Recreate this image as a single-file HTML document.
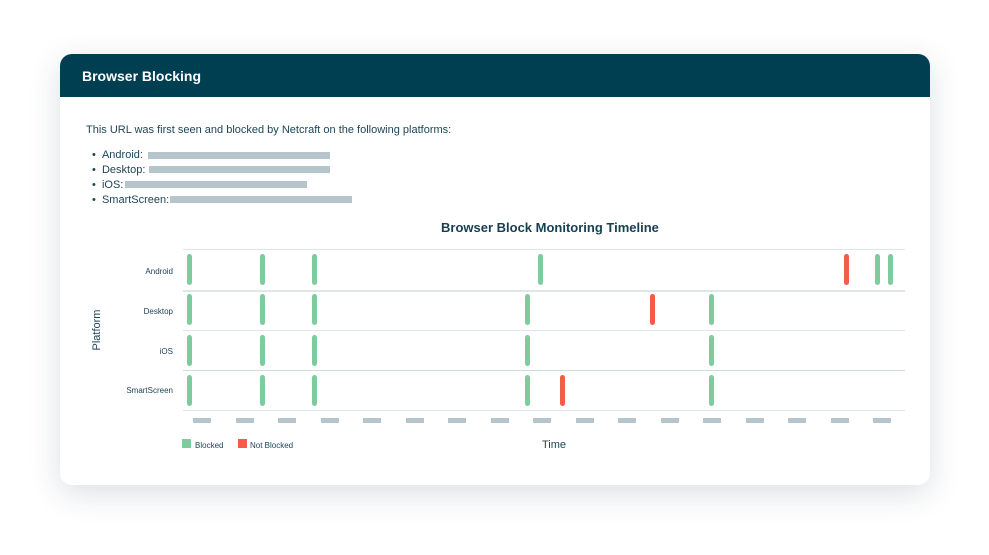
<!DOCTYPE html>
<html><head><meta charset="utf-8"><style>
*{margin:0;padding:0;box-sizing:border-box}
body{width:989px;height:555px;background:#fff;position:relative;font-family:"Liberation Sans",sans-serif;color:#1d4556;overflow:hidden}
.card{position:absolute;left:60px;top:54px;width:870px;height:431px;background:#fff;border-radius:12px;box-shadow:0 8px 32px rgba(0,40,60,0.15);overflow:hidden}
.hd{height:43px;background:#003e52;color:#fff;font-weight:bold;font-size:14px;line-height:45px;padding-left:22px}
.a{position:absolute}
.t{font-size:11px;color:#1d4556}
.ph{background:#b6c5cc;height:7px}
.bar{position:absolute;width:5px;height:31px;border-radius:3px;background:#7ecb9e}
.r{background:#f15c4b}
.hl{position:absolute;left:183px;width:722px;height:1px;background:#dfe6e9}
.dash{position:absolute;top:418px;width:18px;height:5px;background:#b6c5cc}
.lab{position:absolute;font-size:8px;color:#1d4556;text-align:right;width:100px;left:73px}
</style></head><body>
<div class="card"><div class="hd">Browser Blocking</div></div>
<div class="a t" style="left:86px;top:124px">This URL was first seen and blocked by Netcraft on the following platforms:</div>
<div class="a t" style="left:92px;top:149px">•&nbsp;&nbsp;Android:</div><div class="a ph" style="left:148px;top:152px;width:182px"></div>
<div class="a t" style="left:92px;top:164px">•&nbsp;&nbsp;Desktop:</div><div class="a ph" style="left:149px;top:166px;width:181px"></div>
<div class="a t" style="left:92px;top:179px">•&nbsp;&nbsp;iOS:</div><div class="a ph" style="left:125px;top:181px;width:182px"></div>
<div class="a t" style="left:92px;top:194px">•&nbsp;&nbsp;SmartScreen:</div><div class="a ph" style="left:170px;top:196px;width:182px"></div>
<div class="a" style="left:441px;top:220px;font-size:13px;font-weight:bold;color:#163f50">Browser Block Monitoring Timeline</div>
<div class="hl" style="top:249px"></div><div class="hl" style="top:290px;height:2px"></div><div class="hl" style="top:330px"></div><div class="hl" style="top:370px;background:#cfdcdc"></div><div class="hl" style="top:410px"></div>
<div class="lab" style="top:267px">Android</div>
<div class="lab" style="top:307px">Desktop</div>
<div class="lab" style="top:347px">iOS</div>
<div class="lab" style="top:386px">SmartScreen</div>
<div class="a" style="left:72px;top:324px;transform:rotate(-90deg);transform-origin:center;font-size:11px;width:50px;text-align:center">Platform</div>
<div class="bar" style="left:187px;top:254px"></div><div class="bar" style="left:260px;top:254px"></div><div class="bar" style="left:312px;top:254px"></div><div class="bar" style="left:538px;top:254px"></div><div class="bar r" style="left:844px;top:254px"></div><div class="bar" style="left:875px;top:254px"></div><div class="bar" style="left:888px;top:254px"></div>
<div class="bar" style="left:187px;top:294px"></div><div class="bar" style="left:260px;top:294px"></div><div class="bar" style="left:312px;top:294px"></div><div class="bar" style="left:525px;top:294px"></div><div class="bar r" style="left:650px;top:294px"></div><div class="bar" style="left:709px;top:294px"></div>
<div class="bar" style="left:187px;top:335px"></div><div class="bar" style="left:260px;top:335px"></div><div class="bar" style="left:312px;top:335px"></div><div class="bar" style="left:525px;top:335px"></div><div class="bar" style="left:709px;top:335px"></div>
<div class="bar" style="left:187px;top:375px"></div><div class="bar" style="left:260px;top:375px"></div><div class="bar" style="left:312px;top:375px"></div><div class="bar" style="left:525px;top:375px"></div><div class="bar r" style="left:560px;top:375px"></div><div class="bar" style="left:709px;top:375px"></div>
<div class="dash" style="left:193px"></div><div class="dash" style="left:236px"></div><div class="dash" style="left:278px"></div><div class="dash" style="left:321px"></div><div class="dash" style="left:363px"></div><div class="dash" style="left:406px"></div><div class="dash" style="left:448px"></div><div class="dash" style="left:491px"></div><div class="dash" style="left:533px"></div><div class="dash" style="left:576px"></div><div class="dash" style="left:618px"></div><div class="dash" style="left:661px"></div><div class="dash" style="left:703px"></div><div class="dash" style="left:746px"></div><div class="dash" style="left:788px"></div><div class="dash" style="left:831px"></div><div class="dash" style="left:873px"></div>
<div class="a" style="left:182px;top:439px;width:9px;height:9px;background:#7ecb9e"></div>
<div class="a" style="left:195px;top:441px;font-size:8px">Blocked</div>
<div class="a" style="left:238px;top:439px;width:9px;height:9px;background:#f15c4b"></div>
<div class="a" style="left:250px;top:441px;font-size:8px">Not Blocked</div>
<div class="a" style="left:542px;top:439px;font-size:11px">Time</div>
</body></html>
